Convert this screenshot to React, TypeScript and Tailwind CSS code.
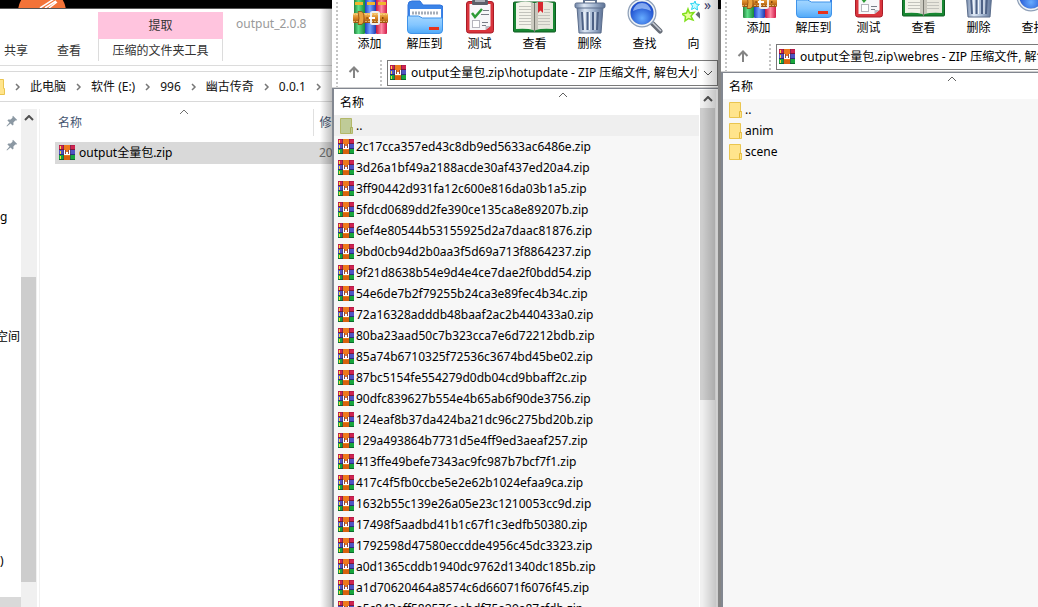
import React from "react";

const hotupdateFiles = [
  "2c17cca357ed43c8db9ed5633ac6486e.zip",
  "3d26a1bf49a2188acde30af437ed20a4.zip",
  "3ff90442d931fa12c600e816da03b1a5.zip",
  "5fdcd0689dd2fe390ce135ca8e89207b.zip",
  "6ef4e80544b53155925d2a7daac81876.zip",
  "9bd0cb94d2b0aa3f5d69a713f8864237.zip",
  "9f21d8638b54e9d4e4ce7dae2f0bdd54.zip",
  "54e6de7b2f79255b24ca3e89fec4b34c.zip",
  "72a16328adddb48baaf2ac2b440433a0.zip",
  "80ba23aad50c7b323cca7e6d72212bdb.zip",
  "85a74b6710325f72536c3674bd45be02.zip",
  "87bc5154fe554279d0db04cd9bbaff2c.zip",
  "90dfc839627b554e4b65ab6f90de3756.zip",
  "124eaf8b37da424ba21dc96c275bd20b.zip",
  "129a493864b7731d5e4ff9ed3aeaf257.zip",
  "413ffe49befe7343ac9fc987b7bcf7f1.zip",
  "417c4f5fb0ccbe5e2e62b1024efaa9ca.zip",
  "1632b55c139e26a05e23c1210053cc9d.zip",
  "17498f5aadbd41b1c67f1c3edfb50380.zip",
  "1792598d47580eccdde4956c45dc3323.zip",
  "a0d1365cddb1940dc9762d1340dc185b.zip",
  "a1d70620464a8574c6d66071f6076f45.zip",
  "a5c843eff589576eebdf75a39a87cfdb.zip",
];

function RarIcon() {
  return (
    <svg className="size-4 shrink-0" viewBox="0 0 16 16" shapeRendering="crispEdges" aria-hidden="true">
      <rect width="16" height="5" fill="#cf2450" />
      <rect width="16" height="1" fill="#b81c48" />
      <rect y="4" width="16" height="1" fill="#7e1538" />
      <rect y="5" width="16" height="5" fill="#4f54c4" />
      <rect y="9" width="16" height="1" fill="#2b2c7c" />
      <rect y="10" width="16" height="5" fill="#17a63c" />
      <rect y="14" width="16" height="1" fill="#0b6a2c" />
      <rect x="4" width="1" height="15" fill="#3c2450" opacity=".45" />
      <rect x="11" width="1" height="15" fill="#3c2450" opacity=".45" />
      <rect x="5" width="6" height="15" fill="#ee7a1c" />
      <rect x="5" y="11" width="6" height="4" fill="#d8600f" />
      <rect x="5" y="5" width="6" height="5" fill="#8c4a48" />
      <rect x="7" y="4" width="2" height="3" fill="#ee7a1c" />
      <path d="M5 5h1v4h1V7h2v2h1V5h1v5H5z" fill="#fff" />
      <path d="M1 1h1v3H1zM1 6h1v3H1zM1 11h1v3H1z" fill="#f7dc3c" />
    </svg>
  );
}

function FolderIcon({ up = false }: { up?: boolean }) {
  return (
    <svg className="size-4 shrink-0" viewBox="0 0 16 16" aria-hidden="true">
      <path
        d="M2.500.5h11v9h1v6h-12z"
        fill={up ? "#bfcb98" : "#ffe48c"}
        stroke={up ? "#b3b868" : "#eac54f"}
      />
      <path d="M12.500 15V9.500h2" fill="none" stroke={up ? "#a9ae58" : "#e5b93a"} />
    </svg>
  );
}

function Caret({ className }: { className: string }) {
  return (
    <svg className={className} viewBox="0 0 10 6" fill="none" stroke="currentColor" aria-hidden="true">
      <path d="M1 5l4-4 4 4" />
    </svg>
  );
}

function PinIcon() {
  return (
    <svg className="size-3" viewBox="0 0 12 12" aria-hidden="true">
      <path d="M7 .8L11.200 5l-.9.6-1-.1-1.900 1.900.1 2.300-.9.9L4.500 8.500 1 11.500l-.5-.5 3-3.500L1.400 5.400l.9-.9 2.300.1 1.900-1.900-.1-1z" fill="#8b98a3" />
    </svg>
  );
}

function AddIcon() {
  return (
    <svg className="size-9" viewBox="0 0 36 36" aria-hidden="true">
      <defs>
        <linearGradient id="bookG">
          <stop offset="0" stopColor="#23843c" /><stop offset=".4" stopColor="#5fe08a" /><stop offset="1" stopColor="#178a38" />
        </linearGradient>
        <linearGradient id="bookB">
          <stop offset="0" stopColor="#1f3fc4" /><stop offset=".45" stopColor="#72a4ff" /><stop offset="1" stopColor="#2039ad" />
        </linearGradient>
        <linearGradient id="bookR">
          <stop offset="0" stopColor="#c8153c" /><stop offset=".5" stopColor="#ff8ba4" /><stop offset="1" stopColor="#d11a48" />
        </linearGradient>
        <linearGradient id="belt" x2="0" y2="1">
          <stop offset="0" stopColor="#f6c56a" /><stop offset=".5" stopColor="#d98524" /><stop offset="1" stopColor="#97500f" />
        </linearGradient>
      </defs>
      <rect x="2" y="1" width="11" height="35" rx="1" fill="url(#bookG)" />
      <rect x="13" y="1" width="11" height="35" rx="1" fill="url(#bookB)" />
      <rect x="24" y="1" width="11" height="35" rx="1" fill="url(#bookR)" />
      <path d="M3 4h8v3H3zM15 4h8v3h-8zM26 4h8v3h-8z" fill="#f0b62c" />
      <rect x="1" y="15" width="35" height="10" rx="1.500" fill="url(#belt)" />
      <path d="M1 16.500h34M1 23.500h34" stroke="#f8d28a" strokeWidth=".7" strokeDasharray="2 1" />
      <path d="M6 13.500h3q3 0 3 6.500t-3 6.500H6q2-6 0-13z" fill="#e9a23e" stroke="#8c4a10" strokeWidth=".8" />
      <rect x="19" y="14" width="8" height="12" rx="1.500" fill="none" stroke="#efefef" strokeWidth="2" />
      <path d="M17 20h6" stroke="#fff" strokeWidth="2" />
      <path d="M14.500 20h1.200M30 20h1.500" stroke="#6a3306" strokeWidth="1.500" />
    </svg>
  );
}

function ExtractIcon() {
  return (
    <svg className="size-9" viewBox="0 0 36 36" aria-hidden="true">
      <defs>
        <linearGradient id="folderFront" x2="0" y2="1">
          <stop offset="0" stopColor="#a3d6ff" /><stop offset=".5" stopColor="#84c6ff" /><stop offset="1" stopColor="#4fa9f8" />
        </linearGradient>
      </defs>
      <path d="M1 7q0-4 4-4h8l3 4h17q3 0 3 3v18H1z" fill="#3b84e8" stroke="#2f73dc" />
      <rect x="3" y="11" width="31" height="10" fill="#fff" />
      <path d="M5 15h27" stroke="#a5adb8" strokeWidth="3" strokeDasharray="2 1" />
      <path d="M.5 18h11l4 2h20v12q0 3.500-3.500 3.500H4Q.5 35.500.5 32z" fill="url(#folderFront)" stroke="#3f93ea" />
      <rect x="22" y="29" width="10" height="3" fill="#e5321c" />
    </svg>
  );
}

function TestIcon() {
  return (
    <svg className="size-9" viewBox="0 0 36 36" aria-hidden="true">
      <rect x="4.500" y="3.500" width="27" height="31.500" rx="2.500" fill="#d9343c" stroke="#a91c28" />
      <path d="M7.500 6h21v22l-5 4h-16z" fill="#f7f7f9" />
      <path d="M23.500 32v-4h5z" fill="#b9bcc4" />
      <rect x="10" y="2" width="16" height="5" rx="1" fill="#5b5f68" />
      <rect x="13" y="1" width="10" height="3" fill="#a9adb5" />
      <path d="M10 15l3 4 7-8" fill="none" stroke="#2d9b35" strokeWidth="2.500" />
      <rect x="10.500" y="22.500" width="7" height="7" fill="#fff" stroke="#b5b5bd" />
      <path d="M21 12.500h6M19 16.500h8M20 24.500h6M20 27.500h4" stroke="#777c86" />
    </svg>
  );
}

function ViewIcon() {
  return (
    <svg className="h-9 w-[43px]" viewBox="0 0 43 36" aria-hidden="true">
      <rect x=".5" y="4" width="42" height="30" rx="1" fill="#188732" stroke="#0c5c20" />
      <path d="M3 5q10-3 18 0v27q-8-2-18-1z" fill="#f4f3ea" />
      <path d="M40 5q-10-3-18 0v27q8-2 18-1z" fill="#e9e8de" />
      <path d="M18 4q3 1 3.500 3q.5-2 3.500-3v27l-3.500 2-3.500-2z" fill="#b9b8ae" opacity=".7" />
      <path d="M21.500 5v29" stroke="#77776f" />
      <path d="M6 8.500h12M6 11.500h12M6 14.500h12M6 17.500h12M6 20.500h12M6 23.500h12M6 26.500h12M25 17.500h12M25 20.500h12M25 23.500h12M25 26.500h12M31 11.500h6M31 14.500h6" stroke="#c3c3bc" />
      <path d="M25 4h5v11l-2.500-2.500L25 15z" fill="#d8262f" />
    </svg>
  );
}

function DeleteIcon() {
  return (
    <svg className="size-9" viewBox="0 0 36 36" aria-hidden="true">
      <defs>
        <linearGradient id="can">
          <stop offset="0" stopColor="#6f84a6" /><stop offset=".3" stopColor="#dde7f4" /><stop offset=".6" stopColor="#a9bbd4" /><stop offset="1" stopColor="#5c7195" />
        </linearGradient>
      </defs>
      <path d="M12 5V2h12v3" fill="none" stroke="#60728e" strokeWidth="2" />
      <path d="M5 9h26l-2 26H7z" fill="url(#can)" stroke="#5b6d8b" />
      <path d="M10 14l1 18M15.500 14v18M21 14v18M26 14l-1 18" stroke="#4d6185" strokeWidth="2" />
      <path d="M12 14l1 18M17.500 14v18M23 14v18" stroke="#f1f6fc" />
      <rect x="3" y="5" width="30" height="5" rx="1.500" fill="url(#can)" stroke="#5b6d8b" />
    </svg>
  );
}

function FindIcon() {
  return (
    <svg className="size-9" viewBox="0 0 36 36" aria-hidden="true">
      <defs>
        <radialGradient id="lens" cx=".5" cy=".7">
          <stop offset="0" stopColor="#66acff" /><stop offset="1" stopColor="#1f50cf" />
        </radialGradient>
      </defs>
      <path d="M25 25l8 8" stroke="#676d78" strokeWidth="5" strokeLinecap="round" />
      <path d="M25 24l9 9" stroke="#c9ced6" strokeWidth="1.500" />
      <circle cx="15" cy="15" r="13" fill="url(#lens)" stroke="#8fa0b8" strokeWidth="3" />
      <circle cx="15" cy="15" r="12.500" fill="none" stroke="#edf3fa" strokeWidth="1.500" />
      <path d="M6 13q2-8 9-8t9 8q-9-5-18 0z" fill="#b8d6ff" opacity=".65" />
    </svg>
  );
}

function WizardIcon() {
  return (
    <svg className="size-9" viewBox="0 0 36 36" aria-hidden="true">
      <path d="M6 11l1.500 4 4.500-.5-3 3.500 2 4-4.500-1.500L3 23l.5-4.500L0 16l4.500-1z" fill="#e7ff9c" stroke="#81e01b" strokeWidth="1.500" />
      <path d="M13 3l1 3 3.500.5-2.500 2 .5 3.500-3-2-3 1.500 1-3.500-2-2.500 3.500-.2z" fill="#c6fbff" stroke="#2bd5f2" />
      <path d="M15 15l18 18" stroke="#666b75" strokeWidth="4" />
    </svg>
  );
}

const tools = [
  { label: "添加", icon: <AddIcon /> },
  { label: "解压到", icon: <ExtractIcon /> },
  { label: "测试", icon: <TestIcon /> },
  { label: "查看", icon: <ViewIcon /> },
  { label: "删除", icon: <DeleteIcon /> },
  { label: "查找", icon: <FindIcon /> },
  { label: "向导", icon: <WizardIcon /> },
];

function Grip() {
  return (
    <div className="w-0.5 shrink-0 self-stretch bg-[repeating-linear-gradient(to_bottom,#c4c4c4_0,#c4c4c4_2px,transparent_2px,transparent_4px)]" />
  );
}

function ArchiveHeader({ id, path }: { id: string; path: string }) {
  return (
    <div className="flex shrink-0 border-b border-[#d0d0d0] pl-1">
      <Grip />
      <div className="min-w-0 flex-1">
        <div className="flex pl-1">
          <div className="flex w-[358px] overflow-hidden">
            {tools.map((tool) => (
              <button key={tool.label} type="button" className="flex w-[55px] shrink-0 flex-col items-center">
                {tool.icon}
                <span className="leading-5 whitespace-nowrap">{tool.label}</span>
              </button>
            ))}
          </div>
          <button type="button" aria-label="更多工具" className="ml-1 self-start text-sm leading-none text-[#3c3c6c]">
            »
          </button>
        </div>
        <div className="mt-1.5 flex">
          <button type="button" aria-label="上一级" className="flex w-[42px] items-center pb-1 pl-2.5">
            <svg className="size-3" viewBox="0 0 12 12" fill="none" stroke="#848484" strokeWidth="2" aria-hidden="true">
              <path d="M6 12V1.500M1.500 6L6 1.500 10.500 6" />
            </svg>
          </button>
          <Grip />
          <div className="mb-px ml-[5px] flex h-[26px] min-w-0 flex-1 items-center border border-[#7a7a7a] bg-white pl-0.5">
            <RarIcon />
            <label htmlFor={id} className="sr-only">
              路径
            </label>
            <select id={id} className="ml-[5px] h-6 min-w-0 flex-1 appearance-none bg-transparent outline-none">
              <option>{path}</option>
            </select>
            <Caret className="mx-1 h-1.5 w-2.5 shrink-0 rotate-180 text-[#505050]" />
          </div>
        </div>
      </div>
    </div>
  );
}

type Entry = { name: string; kind: "up" | "folder" | "zip" };

function EntryTable({ entries, highlightFirst }: { entries: Entry[]; highlightFirst: boolean }) {
  return (
    <div className="min-w-0 flex-1 overflow-hidden bg-[#f7f7f7]">
      <table className="w-[457px] table-fixed border-collapse">
        <thead>
          <tr className="h-[25px] bg-white">
            <th scope="col" className="relative px-1.5 py-0 text-left font-normal">
              名称
              <Caret className="absolute top-0.5 left-1/2 h-1.5 w-2.5 -translate-x-1/2 text-[#606060]" />
            </th>
          </tr>
        </thead>
        <tbody>
          {entries.map((entry, i) => (
            <tr key={entry.name} className={highlightFirst && i === 0 ? "bg-[#efefef]" : ""}>
              <td className="p-0">
                <div className="flex h-[21px] items-center pl-1">
                  {entry.kind === "zip" ? <RarIcon /> : <FolderIcon up={entry.kind === "up" && highlightFirst} />}
                  <span className="ml-0.5">{entry.name}</span>
                </div>
              </td>
            </tr>
          ))}
        </tbody>
      </table>
    </div>
  );
}

const navRows: { text?: string; pin?: boolean; className: string }[] = Array.from({ length: 21 }, (_, i) => {
  if (i < 2) return { pin: true, className: "pl-1.5" };
  if (i === 4) return { text: "g", className: "" };
  if (i === 9) return { text: "空间", className: "-ml-1" };
  if (i === 18) return { text: ")", className: "mt-2" };
  if (i === 20) return { className: "bg-[#d9d9d9]" };
  return { className: "" };
});

function Crumb() {
  return (
    <svg className="mx-2 h-2 w-[9px] shrink-0" viewBox="0 0 9 8" fill="none" stroke="#777" strokeWidth="1.500" aria-hidden="true">
      <path d="M3 1l3 3-3 3" />
    </svg>
  );
}

function Explorer() {
  const crumbs = ["此电脑", "软件 (E:)", "996", "幽古传奇", "0.0.1"];
  return (
    <section className="relative flex w-[332px] shrink-0 flex-col overflow-hidden bg-white">
      <div className="h-[9px] shrink-0 border-b border-[#555] bg-black pl-[18px]">
        <svg className="h-2 w-12" viewBox="0 0 48 8" aria-hidden="true">
          <circle cx="24" cy="12" r="24" fill="#f37338" />
          <path d="M22 8L36-1M27 8l11-7M31 8l8-6" stroke="#fff" strokeWidth="1.500" />
        </svg>
      </div>
      <div className="flex h-[57px] shrink-0 border-b border-[#dcdcdc] pt-[3px]">
        <div className="flex w-[98px] items-end gap-[29px] pb-1 pl-1 text-[#333]">
          <button type="button" className="leading-5">共享</button>
          <button type="button" className="leading-5">查看</button>
        </div>
        <div className="flex w-[125px] flex-col text-[#333]">
          <div className="h-[27px] bg-[#ffc4de] text-center leading-[27px]">提取</div>
          <button
            type="button"
            className="h-[22px] border-x border-[#dcdcdc] bg-white text-center leading-6"
          >
            压缩的文件夹工具
          </button>
        </div>
        <div className="ml-[13px] leading-6 text-[#999]">output_2.0.8</div>
      </div>
      <nav aria-label="路径" className="mt-[5px] flex h-[31px] shrink-0 items-center border-y border-[#d9d9d9] whitespace-nowrap">
        <svg className="h-4 w-[5px] shrink-0" viewBox="0 0 5 16" aria-hidden="true">
          <path d="M0 .5h3.500v9h1v6H0" fill="#ffe48c" stroke="#eac54f" />
        </svg>
        {crumbs.map((crumb) => (
          <React.Fragment key={crumb}>
            <Crumb />
            <a href="#" className="text-[#111]">
              {crumb}
            </a>
          </React.Fragment>
        ))}
        <Crumb />
      </nav>
      <div className="flex min-h-0 flex-1 pt-[7px]">
        <ul className="w-[21px] shrink-0 overflow-hidden whitespace-nowrap">
          {navRows.map((row, i) => (
            <li key={i} className={`flex h-6 items-center ${row.className}`}>
              {row.pin ? <PinIcon /> : row.text}
            </li>
          ))}
        </ul>
        <div className="flex w-4 shrink-0 flex-col bg-[#f0f0f0]">
          <div className="h-[168px] shrink-0 pt-1.5">
            <Caret className="mx-auto h-1.5 w-2.5 stroke-2 text-[#505050]" />
          </div>
          <div className="mr-px h-[305px] bg-[#cdcdcd]" />
        </div>
        <div className="ml-0.5 min-w-0 flex-1 overflow-hidden border-l border-[#f0f0f0] pl-[15px]">
          <table className="w-[358px] table-fixed border-collapse">
            <thead>
              <tr className="h-[27px] text-[#44546f]">
                <th scope="col" className="relative w-[258px] border-r border-[#e0e0e0] px-[3px] py-0 text-left font-normal">
                  名称
                  <Caret className="absolute top-0 left-1/2 h-1.5 w-2.5 -translate-x-1/2 text-[#707070]" />
                </th>
                <th scope="col" className="px-1.5 py-0 text-left font-normal">修改日期</th>
              </tr>
            </thead>
            <tbody>
              <tr className="h-1.5">
                <td colSpan={2} className="p-0" />
              </tr>
              <tr className="h-[22px] bg-[#d9d9d9]">
                <td className="py-0 pl-1">
                  <div className="flex items-center gap-1">
                    <RarIcon />
                    <span>output全量包.zip</span>
                  </div>
                </td>
                <td className="px-1.5 py-0 text-[#6d6d6d]">2022</td>
              </tr>
            </tbody>
          </table>
        </div>
      </div>
      <div className="pointer-events-none absolute inset-y-0 right-0 w-3 bg-gradient-to-r from-transparent to-black/25" />
    </section>
  );
}

export default function App() {
  return (
    <main className="flex h-screen overflow-hidden bg-[#8a8a8a] font-['Noto_Sans','Noto_Sans_CJK_SC',sans-serif] text-xs text-black">
      <Explorer />
      <section className="relative flex w-[386px] shrink-0 flex-col overflow-hidden bg-white">
        <div className="-mt-0.5 shrink-0">
          <ArchiveHeader id="path-hotupdate" path="output全量包.zip\hotupdate - ZIP 压缩文件, 解包大小" />
        </div>
        <div className="flex min-h-0 flex-1 border-t border-l-2 border-[#828790] pt-px">
          <EntryTable
            highlightFirst
            entries={[{ name: "..", kind: "up" }, ...hotupdateFiles.map((name): Entry => ({ name, kind: "zip" }))]}
          />
          <div className="mr-0.5 flex w-[17px] shrink-0 flex-col border-l border-white bg-[#f0f0f0]">
            <div className="h-[18px] shrink-0 pt-1.5">
              <Caret className="mx-auto h-1.5 w-2.5 stroke-2 text-[#505050]" />
            </div>
            <div className="mr-px h-[292px] bg-[#cdcdcd]" />
          </div>
        </div>
        <div className="pointer-events-none absolute inset-y-0 right-0 w-4 bg-gradient-to-r from-transparent to-black/20" />
      </section>
      <div className="w-[3px] shrink-0 border-t-[9px] border-black bg-[#858585]" />
      <section className="flex min-w-0 flex-1 flex-col overflow-hidden bg-white">
        <div className="-mt-[18px] w-[386px] shrink-0">
          <ArchiveHeader id="path-webres" path="output全量包.zip\webres - ZIP 压缩文件, 解包大小" />
        </div>
        <div className="flex min-h-0 flex-1 border-t border-l-2 border-[#828790] pt-px">
          <EntryTable
            highlightFirst={false}
            entries={[
              { name: "..", kind: "up" },
              { name: "anim", kind: "folder" },
              { name: "scene", kind: "folder" },
            ]}
          />
        </div>
      </section>
    </main>
  );
}
